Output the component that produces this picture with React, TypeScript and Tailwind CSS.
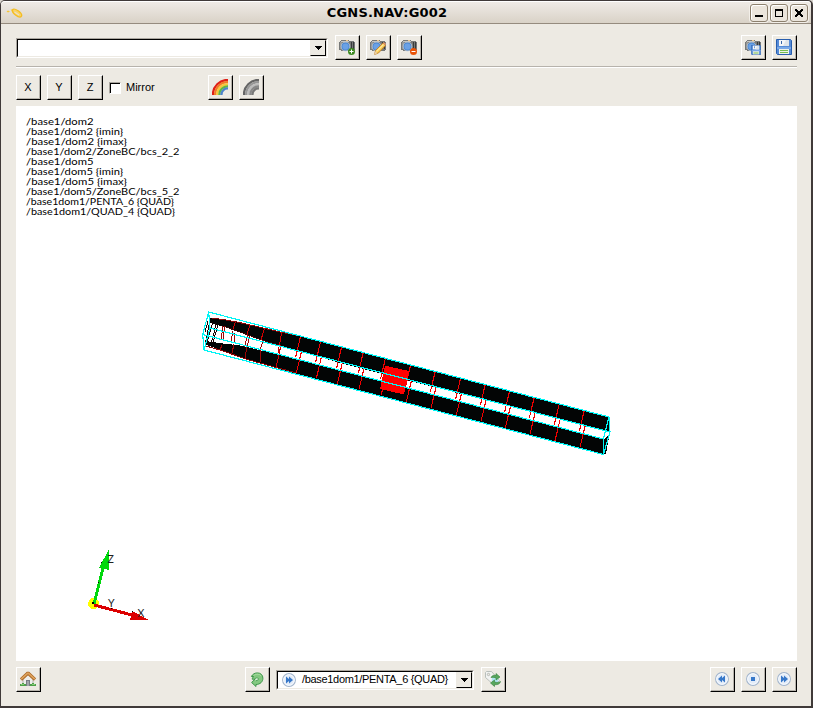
import React from "react";

const UI = "font-['Liberation_Sans',Arial,sans-serif] text-[11px] leading-none text-black";

function Icon({ children, size = 16 }: { children: React.ReactNode; size?: number }) {
  return (
    <svg width={size} height={size} viewBox="0 0 16 16" className="block">
      {children}
    </svg>
  );
}

function ToolButton({ children }: { children: React.ReactNode }) {
  return (
    <button className={`flex h-[25px] w-[25px] shrink-0 border border-t-white border-l-white border-r-black border-b-black bg-[#edeae3] ${UI}`}>
      <span className="flex h-[23px] w-[23px] items-center justify-center border-r border-b border-[#b6b2ab]">
        {children}
      </span>
    </button>
  );
}

function Camera() {
  return (
    <g>
      <path d="M1 2h1V1h8v1h2V2h3v1h1v8h-1v1H2v-1H0V3h1z" fill="#777979" />
      <path d="M2 2h8v1H2z" fill="#c6c7c5" />
      <path d="M1 3h2v7H1z" fill="#969896" />
      <path d="M12 3h1v7h-1zM14 3h1v7h-1z" fill="#393c3c" />
      <path d="M7 1h2v1H7z" fill="#f0c486" />
      <circle cx="6.5" cy="7.5" r="4.8" fill="#b6bec8" />
      <circle cx="6.5" cy="7.5" r="3.9" fill="#4a88d2" />
      <circle cx="6.5" cy="7.5" r="3.1" fill="#6ba1e5" />
    </g>
  );
}

function Floppy() {
  return (
    <g>
      <path d="M.5.5h14l1 1v14h-14l-1-1z" fill="#568bd7" stroke="#285eae" />
      <path d="M3 1h10v6H3z" fill="#f4f6f9" />
      <path d="M10 1h3v6H7z" fill="#dfe4e9" />
      <path d="M5 2h1v3H5z" fill="#3867a7" />
      <path d="M1 8h14v2H1z" fill="#79a8e7" />
      <path d="M3 10h10v5H3z" fill="#eef3e9" />
      <path d="M4 11h8v1H4zM4 13h8v1H4z" fill="#76bd50" />
    </g>
  );
}

function CameraAdd() {
  return (
    <Icon>
      <Camera />
      <circle cx="12.5" cy="12.5" r="3.5" fill="#3c8920" />
      <path d="M12 10.500h1v1.500h1.500v1H13v1.500h-1V13h-1.500v-1H12z" fill="#fff" />
    </Icon>
  );
}

function CameraEdit() {
  return (
    <Icon>
      <Camera />
      <path d="M4.5 15.5l1-4L13 4l2.5 2.5-7 7.5z" fill="#f6c650" stroke="#b97926" strokeWidth=".8" />
      <path d="M6.5 12.5l7-7" stroke="#ffe99b" strokeWidth="1.3" />
      <path d="M13 4l1-1 2 2-1 1.5z" fill="#e6966b" />
      <path d="M4 15.8l1.5-3.5 2 2z" fill="#e9cea5" />
    </Icon>
  );
}

function CameraRemove() {
  return (
    <Icon>
      <Camera />
      <circle cx="12.5" cy="12.5" r="3.5" fill="#e95308" />
      <path d="M10.500 12h4v1h-4z" fill="#fff" />
    </Icon>
  );
}

function CameraSave() {
  return (
    <Icon>
      <Camera />
      <svg x="6" y="6" width="10" height="10" viewBox="0 0 16 16"><Floppy /></svg>
    </Icon>
  );
}

function Rainbow({ colors }: { colors: string[] }) {
  const radii = [14.5, 12.3, 10.2, 8.1, 6];
  return (
    <Icon>
      <g fill="none" strokeWidth="2.3">
        {radii.map((r, i) => (
          <path key={r} d={`M${15.5 - r} 16A${r} ${r} 0 0 1 16 ${15.5 - r}`} stroke={colors[i]} />
        ))}
      </g>
    </Icon>
  );
}

function PlayIcon({ kind }: { kind: "back" | "stop" | "forward" }) {
  return (
    <svg width="14" height="14" viewBox="0 0 14 14" className="block shrink-0">
      <circle cx="7" cy="7" r="6.4" fill="#e3ecf8" stroke="#a3b5cc" strokeWidth="1.1" />
      <circle cx="7" cy="7" r="5.3" fill="none" stroke="#f8fbff" />
      {kind === "forward" && <path d="M4 3.500L7 6V3.500L11 7 7 10.500V8L4 10.500z" fill="#3778c9" />}
      {kind === "back" && <path d="M10 3.500L7 6V3.500L3 7l4 3.500V8l3 2.500z" fill="#3778c9" />}
      {kind === "stop" && <path d="M5 5h4v4H5z" fill="#3778c9" />}
    </svg>
  );
}

function HomeIcon() {
  return (
    <Icon>
      <path d="M3 8l5-5 5 5v6H3z" fill="#eeeeeb" stroke="#999993" strokeWidth=".7" />
      <path d="M6 9h4v6H6z" fill="#777c82" />
      <path d="M7 10h2v5H7z" fill="#a1a5aa" />
      <path d="M1 8.500L7.500 2.500h1L15 8.500" fill="none" stroke="#a96524" strokeWidth="3.3" />
      <path d="M1.200 8.200L7.500 2.300h1L14.800 8.200" fill="none" stroke="#dda25c" strokeWidth="1.7" />
      <path d="M0 13h2v-1h2v1h2v2H0zM10 13h2v-1h2v1h2v2h-6z" fill="#4e9f4a" />
      <path d="M1 13h3v1H1zM12 13h3v1h-3z" fill="#83cc75" />
    </Icon>
  );
}

function RefreshIcon() {
  return (
    <Icon>
      <path
        d="M2.400 5.500C3.500 3.200 5.800 1.900 8.400 1.900c3.300 0 5.500 2.200 5.500 5.300 0 3.600-2.700 6.200-6.900 6.300v2L2.600 11.500 6 8.200H3.200C3.300 7 4 5.600 5 5.500z"
        fill="#83c880" stroke="#3e964a"
      />
      <path d="M6 8.300c0-1.500 2.800-2.100 3.300-.6.300 1-.7 2-2.300 2" fill="#dceedb" stroke="#3e964a" strokeWidth=".9" />
      <path d="M4.500 4.800C7 2.500 11 2.800 12 5" fill="none" stroke="#abe0a2" />
    </Icon>
  );
}

function TagIcon() {
  return (
    <Icon>
      <path d="M.5 1.5l1-1h5l8 9-5 5-9-8z" fill="#f2f3f2" stroke="#b9bfbb" />
      <circle cx="3.5" cy="3.5" r="1.2" fill="#edeae3" stroke="#a9afab" strokeWidth=".8" />
      <circle cx="10" cy="9" r="3.3" fill="#aee4f0" />
      <path d="M6 6.5c1-2.5 4-2.500 5-2V2.500l4 3.500-4 3V7C9.500 6 8 6.500 6 6.500z" fill="#58a65d" stroke="#35833c" strokeWidth=".6" />
      <path d="M15.500 10.500c-.5 3-4 3.500-6 3v2l-4-3.500 4-3V11c3 .8 4 .5 6-.5z" fill="#58a65d" stroke="#35833c" strokeWidth=".6" />
    </Icon>
  );
}

function Combo({ className, children }: { className: string; children?: React.ReactNode }) {
  return (
    <div className={`flex h-5 border border-t-[#aaa69f] border-l-[#aaa69f] border-r-white border-b-white ${className}`}>
      <div className={`flex h-[18px] min-w-0 flex-1 border border-t-black border-l-black border-r-[#edeae3] border-b-[#edeae3] bg-white ${UI}`}>
        <div className="flex min-w-0 flex-1 items-center">{children}</div>
        <div className="flex h-4 w-4 shrink-0 items-center justify-center border border-t-[#edeae3] border-l-[#edeae3] border-r-black border-b-black bg-[#edeae3]">
          <svg width="7" height="4" viewBox="0 0 7 4" shapeRendering="crispEdges">
            <path d="M0 0h7v1H6v1H5v1H4v1H3V3H2V2H1V1H0z" />
          </svg>
        </div>
      </div>
    </div>
  );
}

function WindowControl({ children }: { children: React.ReactNode }) {
  return (
    <button className="flex h-[18px] w-[18px] items-center justify-center rounded-[3px] border border-[#8c806e] bg-[#ebe5dc] shadow-[inset_1px_1px_0_#fff,0_0_0_1px_#f3efe9]">
      <svg width="10" height="10" viewBox="0 0 10 10" shapeRendering="crispEdges">{children}</svg>
    </button>
  );
}

const LABELS: [string, number][] = [
  ["/base1/dom2", 67.5],
  ["/base1/dom2 {imin}", 97],
  ["/base1/dom2 {imax}", 101],
  ["/base1/dom2/ZoneBC/bcs_2_2", 153.5],
  ["/base1/dom5", 67.5],
  ["/base1/dom5 {imin}", 97],
  ["/base1/dom5 {imax}", 101],
  ["/base1/dom5/ZoneBC/bcs_5_2", 153.5],
  ["/base1dom1/PENTA_6 {QUAD}", 148],
  ["/base1dom1/QUAD_4 {QUAD}", 149],
];

// Stations along the mesh where a section outline is visible.
const RINGS = [300.7, 320.7, 341.7, 363.3, 385.5, 410.7, 435.3, 460.7, 485.3, 509.7, 534.3, 559.3, 584.3];

function Scene() {
  return (
    <svg width="781" height="555" viewBox="16 106 781 555" className="block">
      <g fontFamily="Lato, 'Open Sans', sans-serif" fontSize="9.5" fill="#000">
        {LABELS.map(([text, width], i) => (
          <text key={text} x="26" y={125 + i * 10} textLength={width} lengthAdjust="spacingAndGlyphs">{text}</text>
        ))}
      </g>
      <g shapeRendering="crispEdges" fill="none" strokeWidth="1">
        <path fill="#030505" d="M210 318L223 320 237 322.500 257 327 280 332.500 300 336 609 417 610 432 340 363 320 357 300 351.500 280 345.500 263 340.500 248 335.500 237 331.500 223 326.500 210 323z" />
        <path fill="#030505" d="M206 341L223 343.500 240 345.500 257 349.500 277 354 300 359.500 603.500 439 603.500 454 340 386 297 374 278 368.500 260 363 247 359.500 233 354.500 220 349.500 206 345z" />
        <path fill="#030505" d="M609.500 434L606 454 603.500 454V440z" />
        <g stroke="#8a0808">
          <path d="M212 318L223 319.500 237 322 257 326.500 280 332 300 336" />
          <path d="M206 346L220 350 233 354.500 247 359.500 260 363 278 368 297 373" />
          <path d="M223 326L240 332 263 340.500 281 345.500" stroke="#3a0505" />
        </g>
        <g stroke="#f00000" strokeWidth="1.1">
          {RINGS.map((x) => {
            const y = 311.7 + (x - 208.7) * 0.2625;
            return <path key={x} d={`M${x} ${y}L${x - 5} ${y + 21}M${x + 0.7} ${y + 16}L${x - 4.3} ${y + 37}`} />;
          })}
        </g>
        <g stroke="#d00000">
          <path d="M281.700 332.500L278 353M281 345L276 368M264.500 328L261 340M250 325.500L247 334M235.500 322L233 329" />
        </g>
        <g stroke="#9c0505">
          <path d="M263 340L260 351M260.500 351L261 362M248 334L244.500 347M250 336L247 346M247 347L245 358M233 331L231 342M235 333L234 342M234 344L232 353M223 326L221 340M225 326L223 339M222 345L220 350" />
        </g>
        <path stroke="#180505" d="M210 320L205 345M213 322L207 342M216 323L214 333 211 343M218 324L213 343M208 321L205 332" />
        <path fill="#f00" d="M385 365.700L409.300 371 404 394.500 380 389z" />
        <path stroke="#00f5f5" strokeWidth="1.2" d="M208.700 312L609 417 610 432 603.500 454.500 204 350 202.700 334.500zM208.700 312L210 328 610 432M202.700 334.500L603.500 439V454M603.500 439L609 417M210 328L204 350" />
      </g>
      <g shapeRendering="crispEdges">
        <path d="M91 598h4l4 3v5l-4 3h-4l-3-4v-2z" fill="#ff0" />
        <path d="M94 604L104 564" stroke="#00d80c" strokeWidth="3" />
        <path d="M108.500 550L109 570 99 568z" fill="#00d80c" />
        <path d="M94 605L132 615" stroke="#dc0000" strokeWidth="3" />
        <path d="M149 620L130 620 132 611z" fill="#dc0000" />
        <path d="M92 602h2v2h-2zM98 582h1v1h-1zM111 608h1v1h-1zM132 611h1v1h-1zM101 562h1v1h-1z" fill="#000" />
      </g>
      <g fontFamily="Lato, 'Open Sans', sans-serif" fontSize="10.5" fill="#222">
        <text x="107.5" y="563">Z</text>
        <text x="108" y="607">Y</text>
        <text x="137.5" y="617">X</text>
      </g>
    </svg>
  );
}

export default function App() {
  return (
    <div className="h-[708px] w-[813px] overflow-hidden bg-[#d8d4cd]">
      <div className="flex h-full flex-col rounded-t-[5px] border border-r-2 border-b-2 border-[#403a39] bg-[#edeae3]">
        <header className="flex h-[23px] shrink-0 items-center rounded-t-[4px] border-t border-b border-t-white border-b-[#958b7e] bg-linear-to-b from-[#efebe6] to-[#d9d2c7]">
          <div className="w-[80px] pl-[5px]">
            <svg width="18" height="12" viewBox="0 0 18 12" className="block">
              <path d="M.5 4.500l1.500-1 2 1-2 1z" fill="#f6c535" />
              <path d="M4.500 2.500h5l1 1.500H6z" fill="#f6c535" />
              <ellipse cx="11" cy="6" rx="5.5" ry="2.4" transform="rotate(38 11 6)" fill="#f8d368" stroke="#f4bd22" strokeWidth="1.3" />
              <path d="M8.500 5l4.500 3" stroke="#e9dfca" strokeWidth="1.2" />
            </svg>
          </div>
          <h1 className="w-[612px] text-center font-['DejaVu_Sans',sans-serif] text-[13px] leading-none font-bold tracking-[0.2px] text-black">CGNS.NAV:G002</h1>
          <div className="ml-auto flex gap-0.5 pr-[3px]">
            <WindowControl><path d="M1 7h8v2H1z" /></WindowControl>
            <WindowControl><path fillRule="evenodd" d="M1 1h8v8H1zM2 3v5h6V3z" /></WindowControl>
            <WindowControl><path d="M1 1h2v1h1v1h2V2h1V1h2v2H8v1H7v2h1v1h1v2H7V8H6V7H4v1H3v1H1V7h1V6h1V4H2V3H1z" /></WindowControl>
          </div>
        </header>
        <main className="flex flex-1 flex-col pt-[11px] pr-[14px] pl-[15px]">
          <div className="flex h-[25px] items-center">
            <Combo className="w-[312px]" />
            <div className="ml-[7px] flex gap-1.5">
              <ToolButton><CameraAdd /></ToolButton>
              <ToolButton><CameraEdit /></ToolButton>
              <ToolButton><CameraRemove /></ToolButton>
            </div>
            <div className="ml-auto flex gap-1.5">
              <ToolButton><CameraSave /></ToolButton>
              <ToolButton><Icon><Floppy /></Icon></ToolButton>
            </div>
          </div>
          <div className="mt-1.5 h-0.5 border-t border-b border-t-[#b7b3ac] border-b-white" />
          <div className="mt-[7px] flex h-[25px] items-center">
            <div className="flex gap-1.5">
              <ToolButton>X</ToolButton>
              <ToolButton>Y</ToolButton>
              <ToolButton>Z</ToolButton>
            </div>
            <label className={`ml-1.5 flex w-[99px] items-center gap-[5px] ${UI}`}>
              <span className="h-3 w-3 border border-t-[#aaa69f] border-l-[#aaa69f] border-r-white border-b-white">
                <span className="block h-full w-full border-t border-l border-black bg-white" />
              </span>
              Mirror
            </label>
            <div className="flex gap-1.5">
              <ToolButton><Rainbow colors={["#df2017", "#f17a25", "#f5c93a", "#5fb744", "#4c83cb"]} /></ToolButton>
              <ToolButton><Rainbow colors={["#656565", "#969696", "#bcbcbc", "#888888", "#777777"]} /></ToolButton>
            </div>
          </div>
          <div className="mt-1.5 h-[555px] w-[781px] bg-white"><Scene /></div>
          <div className="mt-1.5 flex h-[25px] items-center">
            <ToolButton><HomeIcon /></ToolButton>
            <div className="ml-[204px] flex items-center">
              <ToolButton><RefreshIcon /></ToolButton>
              <Combo className="ml-1.5 w-[198px]">
                <span className="flex items-center gap-1.5 pl-1 tracking-[-0.32px] whitespace-pre">
                  <PlayIcon kind="forward" />
                  /base1dom1/PENTA_6 {"{QUAD}"}
                </span>
              </Combo>
              <span className="ml-[7px]"><ToolButton><TagIcon /></ToolButton></span>
            </div>
            <div className="ml-auto flex gap-1.5">
              <ToolButton><PlayIcon kind="back" /></ToolButton>
              <ToolButton><PlayIcon kind="stop" /></ToolButton>
              <ToolButton><PlayIcon kind="forward" /></ToolButton>
            </div>
          </div>
        </main>
      </div>
    </div>
  );
}
